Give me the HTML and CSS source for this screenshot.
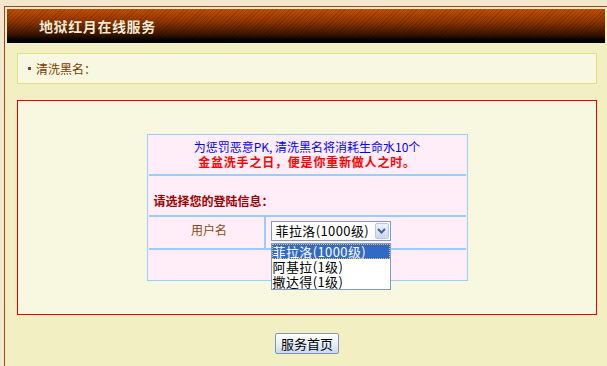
FILE: index.html
```html
<!DOCTYPE html>
<html lang="zh-CN">
<head>
<meta charset="UTF-8" />
<title>地狱红月在线服务</title>
<link rel="stylesheet" href="styles.css">
</head>
<body>
  <div class="frame">
    <div class="header">
      <h1>地狱红月在线服务</h1>
    </div>

    <div class="content">
      <div class="crumb"><span class="dot"></span>清洗黑名：</div>

      <div class="panel">
        <div class="info">
          <div class="row notice">
            <p class="blue">为惩罚恶意PK, 清洗黑名将消耗生命水10个</p>
            <p class="red">金盆洗手之日，便是你重新做人之时。</p>
          </div>
          <div class="row prompt">请选择您的登陆信息：</div>
          <div class="row field">
            <div class="label">用户名</div>
            <div class="value">
              <div class="select">
                <span class="current">菲拉洛(1000级)</span>
                <span class="arrow">
                  <svg width="9" height="6" viewBox="0 0 9 6"><path d="M1 1 L4.5 4.5 L8 1" fill="none" stroke="#4d6185" stroke-width="2"/></svg>
                </span>
                <ul class="options">
                  <li class="selected">菲拉洛(1000级)</li>
                  <li>阿基拉(1级)</li>
                  <li>撒达得(1级)</li>
                </ul>
              </div>
            </div>
          </div>
          <div class="row empty"></div>
        </div>
      </div>

      <div class="actions">
        <button>服务首页</button>
      </div>
    </div>
  </div>
</body>
</html>
```

FILE: styles.css
```css
body, html {
  margin: 0; padding: 0; height: 100%;
  font-family: "Noto Sans CJK SC", "Liberation Sans", sans-serif;
  font-size: 12px;
  background: #f3e7cd;
  overflow: hidden;
}
.frame {
  margin: 6px 0 0 4px;
  border-top: 1px solid #a8402a;
  border-left: 1px solid #a8402a;
  padding: 2px 2px 0 2px;
  background: #f2f0c3;
  height: calc(100% - 6px);
  box-sizing: border-box;
}
.header {
  height: 34px;
  display: flex;
  align-items: center;
  padding-left: 32px;
  background:
    repeating-linear-gradient(-45deg, rgba(0,0,0,0.14) 0, rgba(0,0,0,0.14) 1px, transparent 1px, transparent 3px),
    linear-gradient(#c44e02 0%, #8e3500 38%, #3a1400 75%, #000 92%, #000 100%);
}
.header h1 {
  margin: 0;
  font-size: 14px;
  font-weight: 700;
  letter-spacing: 0.6px;
  color: #f6ead0;
  text-shadow: 0 0 1px rgba(0,0,0,0.5);
}
.content {
  padding: 10px 8px 0 10px;
}
.crumb {
  height: 29px;
  display: flex;
  align-items: center;
  padding-left: 10px;
  border: 1px solid #e2e27c;
  background: #f8f8e2;
  color: #7a3a00;
}
.dot {
  width: 3px;
  height: 3px;
  background: #8a4010;
  margin-right: 5px;
}
.panel {
  margin-top: 16px;
  border: 1px solid #ee0000;
  background: #f8f8e0;
  padding: 33px 0;
}
.info {
  width: 321px;
  box-sizing: border-box;
  margin: 0 auto;
  border: 1px solid #99ccff;
  background: #ffeef8;
  padding: 0 1px;
}
.row {
  border-bottom: 2px solid #99ccff;
  box-sizing: border-box;
}
.row:last-child {
  border-bottom: none;
}
.notice {
  height: 41px;
  padding-top: 4px;
  text-align: center;
}
.notice p {
  margin: 0;
  line-height: 15px;
}
.blue {
  color: #0000ff;
}
.red {
  color: #ff0000;
  font-weight: 700;
  letter-spacing: 0.8px;
}
.prompt {
  height: 41px;
  padding: 17px 0 0 5px;
  line-height: 15px;
  color: #990000;
  font-weight: 700;
}
.field {
  height: 33px;
  display: flex;
}
.label {
  width: 117px;
  border-right: 2px solid #99ccff;
  text-align: center;
  padding: 5px 0 0 6px;
  box-sizing: border-box;
  line-height: 15px;
  color: #8a4a10;
}
.value {
  padding: 4px 0 0 5px;
}
.select {
  position: relative;
  width: 120px;
  height: 20px;
  box-sizing: border-box;
  border: 1px solid #7f9db9;
  background: #fff;
  display: flex;
  align-items: center;
  font-size: 13px;
  letter-spacing: 0.4px;
  color: #000;
}
.current {
  padding-left: 4px;
  flex: 1;
  line-height: 16px;
}
.arrow {
  width: 14px;
  height: 16px;
  margin-right: 1px;
  box-sizing: border-box;
  border: 1px solid #b7c8e6;
  border-radius: 2px;
  background: linear-gradient(#eef3fd, #c7d7f5);
  display: flex;
  align-items: center;
  justify-content: center;
}
.options {
  position: absolute;
  left: -1px;
  top: 21px;
  width: 120px;
  box-sizing: border-box;
  margin: 0;
  padding: 0;
  list-style: none;
  border: 1px solid #7f9db9;
  background: #fff;
  z-index: 2;
}
.options li {
  height: 15px;
  line-height: 15px;
  padding-left: 1px;
}
.options li.selected {
  background: #316ac5;
  color: #fff;
  outline: 1px dotted #e8c060;
  outline-offset: -1px;
}
.empty {
  height: 30px;
}
.actions {
  display: flex;
  justify-content: center;
  padding-top: 18px;
}
button {
  width: 64px;
  height: 21px;
  padding: 0;
  border: 1px solid #7e96b8;
  border-radius: 2px;
  background: linear-gradient(#ffffff, #e4ecf6 60%, #cad9ec);
  font-family: "Noto Sans CJK SC", sans-serif;
  font-size: 13px;
  color: #000;
  line-height: 17px;
}
```
